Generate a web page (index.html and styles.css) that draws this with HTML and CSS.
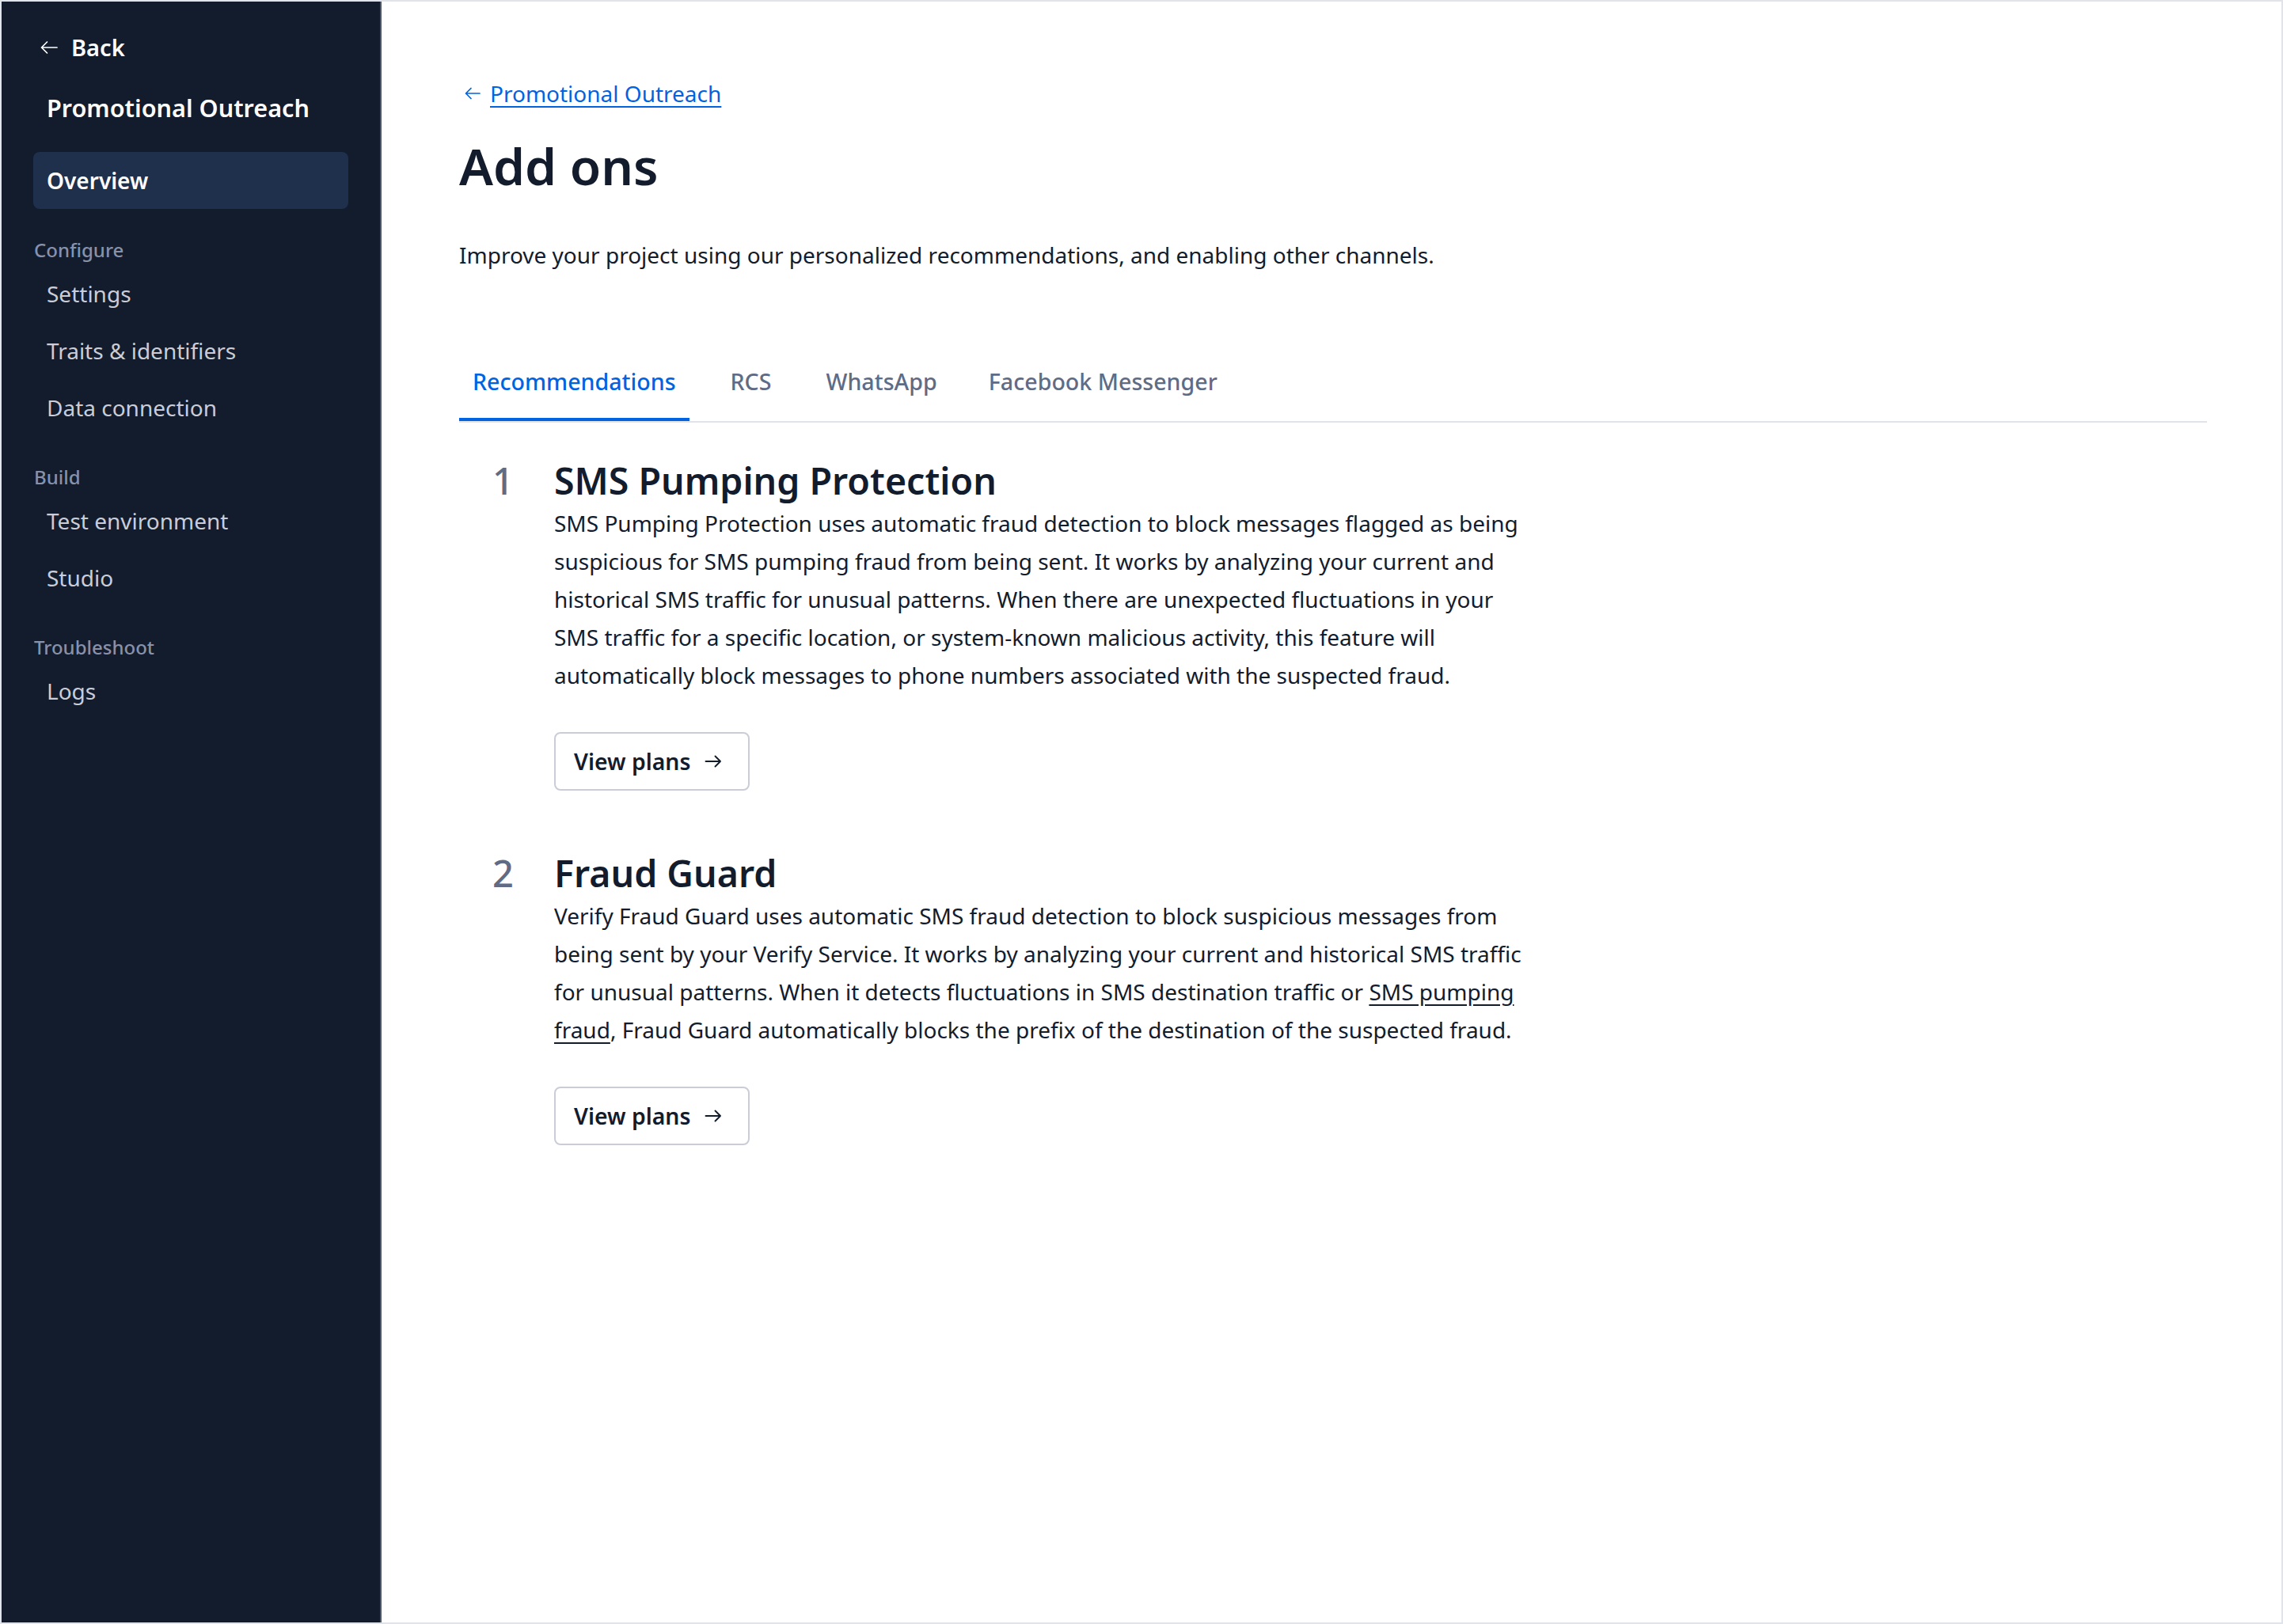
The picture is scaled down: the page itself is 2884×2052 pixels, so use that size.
FILE: index.html
```html
<!DOCTYPE html>
<html lang="en">
<head>
    <meta charset="UTF-8">
    <meta name="viewport" content="width=device-width, initial-scale=1.0">
    <title>Add ons - Promotional Outreach</title>
    <link rel="stylesheet" href="styles.css">
</head>
<body>
    <div class="frame">
        <aside class="sidebar">
            <a class="back" href="#">
                <svg class="arrow" width="22" height="18" viewBox="0 0 22 18" fill="none" stroke="currentColor" stroke-width="1.7" stroke-linecap="round" stroke-linejoin="round"><path d="M21 9H1.5M8.5 2L1.5 9l7 7"/></svg>
                Back
            </a>
            <div class="project">Promotional Outreach</div>
            <nav>
                <a class="nav-item active" href="#">Overview</a>
                <div class="nav-label">Configure</div>
                <a class="nav-item" href="#">Settings</a>
                <a class="nav-item" href="#">Traits &amp; identifiers</a>
                <a class="nav-item" href="#">Data connection</a>
                <div class="nav-label">Build</div>
                <a class="nav-item" href="#">Test environment</a>
                <a class="nav-item" href="#">Studio</a>
                <div class="nav-label">Troubleshoot</div>
                <a class="nav-item" href="#">Logs</a>
            </nav>
        </aside>

        <main class="content">
            <a class="crumb" href="#">
                <svg class="arrow" width="20" height="18" viewBox="0 0 20 18" fill="none" stroke="currentColor" stroke-width="1.7" stroke-linecap="round" stroke-linejoin="round"><path d="M19 9H1.5M8 2.5L1.5 9 8 15.5"/></svg>
                <span>Promotional Outreach</span>
            </a>
            <h1>Add ons</h1>
            <p class="lead">Improve your project using our personalized recommendations, and enabling other channels.</p>

            <div class="tabs">
                <a class="tab active" href="#">Recommendations</a>
                <a class="tab" href="#">RCS</a>
                <a class="tab" href="#">WhatsApp</a>
                <a class="tab" href="#">Facebook Messenger</a>
            </div>

            <ol class="addons">
                <li class="addon">
                    <span class="num">1</span>
                    <div>
                        <h2>SMS Pumping Protection</h2>
                        <p>SMS Pumping Protection uses automatic fraud detection to block messages flagged as being suspicious for SMS pumping fraud from being sent. It works by analyzing your current and historical SMS traffic for unusual patterns. When there are unexpected fluctuations in your SMS traffic for a specific location, or system-known malicious activity, this feature will automatically block messages to phone numbers associated with the suspected fraud.</p>
                        <button class="plans">View plans
                            <svg width="22" height="18" viewBox="0 0 22 18" fill="none" stroke="currentColor" stroke-width="1.9" stroke-linecap="round" stroke-linejoin="round"><path d="M1.5 9H20M13.5 2.5L20 9l-6.5 6.5"/></svg>
                        </button>
                    </div>
                </li>
                <li class="addon">
                    <span class="num">2</span>
                    <div>
                        <h2>Fraud Guard</h2>
                        <p>Verify Fraud Guard uses automatic SMS fraud detection to block suspicious messages from being sent by your Verify Service. It works by analyzing your current and historical SMS traffic for unusual patterns. When it detects fluctuations in SMS destination traffic or <a href="#">SMS pumping fraud</a>, Fraud Guard automatically blocks the prefix of the destination of the suspected fraud.</p>
                        <button class="plans">View plans
                            <svg width="22" height="18" viewBox="0 0 22 18" fill="none" stroke="currentColor" stroke-width="1.9" stroke-linecap="round" stroke-linejoin="round"><path d="M1.5 9H20M13.5 2.5L20 9l-6.5 6.5"/></svg>
                        </button>
                    </div>
                </li>
            </ol>
        </main>
    </div>
</body>
</html>
```

FILE: styles.css
```css
* {
    box-sizing: border-box;
}
body {
    margin: 0;
    font-family: "Noto Sans", "Open Sans", Arial, sans-serif;
    color: #121c2d;
    background-color: #fff;
}
a {
    color: inherit;
    text-decoration: none;
}
.frame {
    display: flex;
    height: 2052px;
    border: 2px solid #e1e3ea;
}

/* sidebar */
.sidebar {
    width: 480px;
    flex-shrink: 0;
    padding: 38px 40px 0;
    background-color: #121c2d;
    border-right: 2px solid #4b5568;
}
.back {
    display: flex;
    align-items: center;
    gap: 17px;
    padding-left: 9px;
    color: #fff;
    font-size: 29px;
    font-weight: 600;
    line-height: 40px;
}
.project {
    margin-top: 34px;
    padding-left: 17px;
    color: #fff;
    font-size: 30.6px;
    font-weight: 600;
    line-height: 44px;
}
.nav-item {
    display: block;
    padding: 16px 17px;
    color: #cacdd8;
    font-size: 28px;
    line-height: 40px;
    border-radius: 8px;
}
.nav-item.active {
    margin-top: 34px;
    background-color: #1f304c;
    color: #fff;
    font-weight: 600;
}
.nav-label {
    margin: 35px 0 4px;
    padding-left: 1px;
    color: #8891aa;
    font-size: 24px;
    font-weight: 500;
    line-height: 30px;
}
.nav-item + .nav-label {
    margin-top: 37px;
}

/* main column */
.content {
    flex: 1;
    padding: 96px 94px 0 98px;
}
.crumb {
    display: inline-flex;
    align-items: center;
    gap: 12px;
    color: #0263e0;
    font-size: 28px;
    line-height: 40px;
}
.crumb .arrow {
    margin-left: 7px;
}
.crumb span {
    text-decoration: underline;
    text-underline-offset: 5px;
    text-decoration-thickness: 2px;
}
h1 {
    margin: 32px 0 0;
    font-size: 64px;
    font-weight: 600;
    line-height: 80px;
}
.lead {
    margin: 48px 0 0;
    font-size: 28px;
    line-height: 48px;
}

.tabs {
    display: flex;
    gap: 35px;
    margin-top: 100px;
    border-bottom: 2px solid #e1e3ea;
}
.tab {
    padding: 16px 17px 26px;
    color: #606b85;
    font-size: 28.6px;
    font-weight: 500;
    line-height: 40px;
    border-bottom: 4px solid transparent;
}
.tab:last-child {
    margin-left: -4px;
}
.tab.active {
    color: #0263e0;
    border-bottom-color: #0263e0;
}

.addons {
    list-style: none;
    margin: 43px 0 0;
    padding: 0;
}
.addon {
    display: grid;
    grid-template-columns: 120px 1fr;
}
.addon + .addon {
    margin-top: 74px;
}
.num {
    padding-left: 42px;
    color: #606b85;
    font-size: 47px;
    font-weight: 500;
    line-height: 60px;
}
.addon h2 {
    margin: 0;
    font-size: 46.5px;
    font-weight: 600;
    line-height: 60px;
}
.addon p {
    max-width: 1240px;
    margin: 0;
    font-size: 28px;
    line-height: 48px;
}
.addon p a {
    text-decoration: underline;
    text-underline-offset: 5px;
}
.plans {
    display: inline-flex;
    align-items: center;
    gap: 18px;
    margin-top: 48px;
    padding: 15px 33px 15px 23px;
    border: 2px solid #cacdd8;
    border-radius: 8px;
    background-color: #fff;
    color: #121c2d;
    font-family: inherit;
    font-size: 28.4px;
    font-weight: 600;
    line-height: 40px;
    cursor: pointer;
}
```
